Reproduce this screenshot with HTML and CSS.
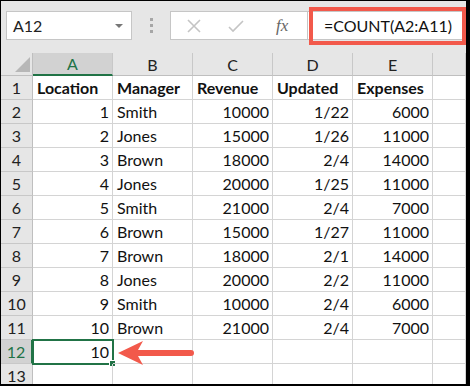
FILE: index.html
```html
<!DOCTYPE html>
<html lang="en">
<head>
    <meta charset="UTF-8">
    <title>COUNT example</title>
    <link rel="stylesheet" href="styles.css">
</head>
<body>
    <div class="frame">
        <div class="toolbar">
            <div class="name-box">
                <span>A12</span>
                <span class="drop"></span>
            </div>
            <div class="grip"><i></i><i></i><i></i></div>
            <div class="formula-bar">
                <div class="buttons">
                    <svg class="btn-x" width="16" height="16" viewBox="0 0 16 16"><path d="M2 2L14 14M14 2L2 14" stroke="#c4c4c4" stroke-width="1.6" fill="none"/></svg>
                    <svg class="btn-ok" width="16" height="16" viewBox="0 0 16 16"><path d="M1 9L5 13L15 3" stroke="#c4c4c4" stroke-width="1.6" fill="none"/></svg>
                    <span class="fx">fx</span>
                </div>
                <div class="formula">=COUNT(A2:A11)</div>
                <div class="callout"></div>
            </div>
        </div>

        <div class="sheet" id="sheet"></div>

        <svg class="arrow" width="80" height="30" viewBox="0 0 80 30">
            <path d="M1 15L26 3L21 12H74a3 3 0 0 1 0 6H21L26 27Z" fill="#f2594b"/>
        </svg>
    </div>

    <script src="script.js"></script>
</body>
</html>
```

FILE: script.js
```js
const cols = ['A', 'B', 'C', 'D', 'E', ''];
const rows = [
    ['Location', 'Manager', 'Revenue', 'Updated', 'Expenses'],
    [1, 'Smith', 10000, '1/22', 6000],
    [2, 'Jones', 15000, '1/26', 11000],
    [3, 'Brown', 18000, '2/4', 14000],
    [4, 'Jones', 20000, '1/25', 11000],
    [5, 'Smith', 21000, '2/4', 7000],
    [6, 'Brown', 15000, '1/27', 11000],
    [7, 'Brown', 18000, '2/1', 14000],
    [8, 'Jones', 20000, '2/2', 11000],
    [9, 'Smith', 10000, '2/4', 6000],
    [10, 'Brown', 21000, '2/4', 7000],
    [10],
    []
];

const sheet = document.getElementById('sheet');

function cell(cls, text) {
    const div = document.createElement('div');
    div.className = cls;
    div.textContent = text === undefined ? '' : text;
    sheet.appendChild(div);
    return div;
}

cell('corner');
cols.forEach(c => cell(c === 'A' ? 'col-head selected' : 'col-head', c));

rows.forEach((row, r) => {
    const n = r + 1;
    cell(n === 12 ? 'row-head selected' : 'row-head', n);
    cols.forEach((c, i) => {
        const v = row[i];
        let cls = 'cell';
        if (n === 1) cls += ' bold';
        if (typeof v === 'number' || (typeof v === 'string' && v.includes('/'))) cls += ' num';
        if (n === 12 && i === 0) cls += ' active';
        cell(cls, v);
    });
});
```

FILE: styles.css
```css
body {
    margin: 0;
    font-family: 'Lato', 'Liberation Sans', sans-serif;
    background: #fff;
}

.frame {
    position: relative;
    width: 465px;
    height: 383px;
    border-top: 1px solid #000;
    border-left: 1px solid #000;
    border-right: 4px solid #000;
    border-bottom: 2px solid #000;
    overflow: hidden;
    background: #fff;
}

/* top strip with name box and formula bar */
.toolbar {
    height: 52px;
    background: #e6e6e6;
    display: flex;
    align-items: flex-start;
    padding-top: 10px;
    box-sizing: border-box;
}

.name-box {
    flex-shrink: 0;
    margin-left: 5px;
    width: 126px;
    height: 29px;
    box-sizing: border-box;
    background: #fff;
    border: 1px solid #c6c6c6;
    display: flex;
    align-items: center;
    justify-content: space-between;
    padding: 0 8px 0 6px;
    font-size: 16px;
    color: #222;
}

.drop {
    width: 0;
    height: 0;
    border-left: 4px solid transparent;
    border-right: 4px solid transparent;
    border-top: 4px solid #777;
}

.grip {
    flex-shrink: 0;
    width: 38px;
    height: 29px;
    display: flex;
    flex-direction: column;
    align-items: center;
    justify-content: center;
    gap: 3px;
}

.grip i {
    width: 3px;
    height: 3px;
    background: #a6a6a6;
}

.formula-bar {
    position: relative;
    flex: 1;
    min-width: 0;
    height: 29px;
    box-sizing: border-box;
    background: #fff;
    border: 1px solid #c6c6c6;
    display: flex;
}

.buttons {
    flex-shrink: 0;
    width: 137px;
    box-sizing: border-box;
    border-right: 1px solid #c6c6c6;
    display: flex;
    align-items: center;
    padding-left: 15px;
}

.btn-ok {
    margin-left: 26px;
}

.fx {
    margin-left: 32px;
    font-family: 'Liberation Serif', serif;
    font-style: italic;
    font-size: 17px;
    color: #666;
}

.formula {
    flex: 1;
    display: flex;
    align-items: center;
    padding-left: 16px;
    font-size: 16px;
    color: #111;
    white-space: nowrap;
}

.callout {
    position: absolute;
    left: 138px;
    right: -1px;
    top: -5px;
    bottom: -6px;
    border: 4px solid #f2594b;
}

/* worksheet grid */
.sheet {
    display: grid;
    grid-template-columns: 32px repeat(5, 80px) 1fr;
    grid-template-rows: 23px repeat(13, 24px);
    font-size: 16px;
    color: #111;
}

.corner,
.col-head,
.row-head {
    background: #e6e6e6;
    box-sizing: border-box;
    color: #222;
}

.corner {
    position: relative;
    border-right: 1px solid #bfbfbf;
    border-bottom: 1px solid #bfbfbf;
}

.corner::after {
    content: '';
    position: absolute;
    right: 2px;
    bottom: 3px;
    border-left: 15px solid transparent;
    border-bottom: 15px solid #b7b7b7;
}

.col-head {
    border-right: 1px solid #c8c8c8;
    border-bottom: 1px solid #bfbfbf;
    display: flex;
    align-items: center;
    justify-content: center;
}

.row-head {
    border-right: 1px solid #bfbfbf;
    border-bottom: 1px solid #c8c8c8;
    display: flex;
    align-items: center;
    justify-content: center;
}

.col-head.selected {
    background: #d2d2d2;
    color: #217346;
    border-bottom: 2px solid #217346;
}

.row-head.selected {
    background: #d2d2d2;
    color: #217346;
    border-right: 2px solid #217346;
}

.cell {
    position: relative;
    box-sizing: border-box;
    border-right: 1px solid #d4d4d4;
    border-bottom: 1px solid #d4d4d4;
    display: flex;
    align-items: center;
    padding: 0 3px 0 4px;
    white-space: nowrap;
}

.cell.num {
    justify-content: flex-end;
}

.cell.bold {
    font-weight: bold;
}

.cell.active::before {
    content: '';
    position: absolute;
    left: -1px;
    top: -1px;
    right: -2px;
    bottom: -2px;
    border: 2px solid #217346;
}

.cell.active::after {
    content: '';
    position: absolute;
    right: -4px;
    bottom: -4px;
    width: 5px;
    height: 5px;
    background: #217346;
    border: 1px solid #fff;
}

.arrow {
    position: absolute;
    left: 116px;
    top: 337px;
}
```
